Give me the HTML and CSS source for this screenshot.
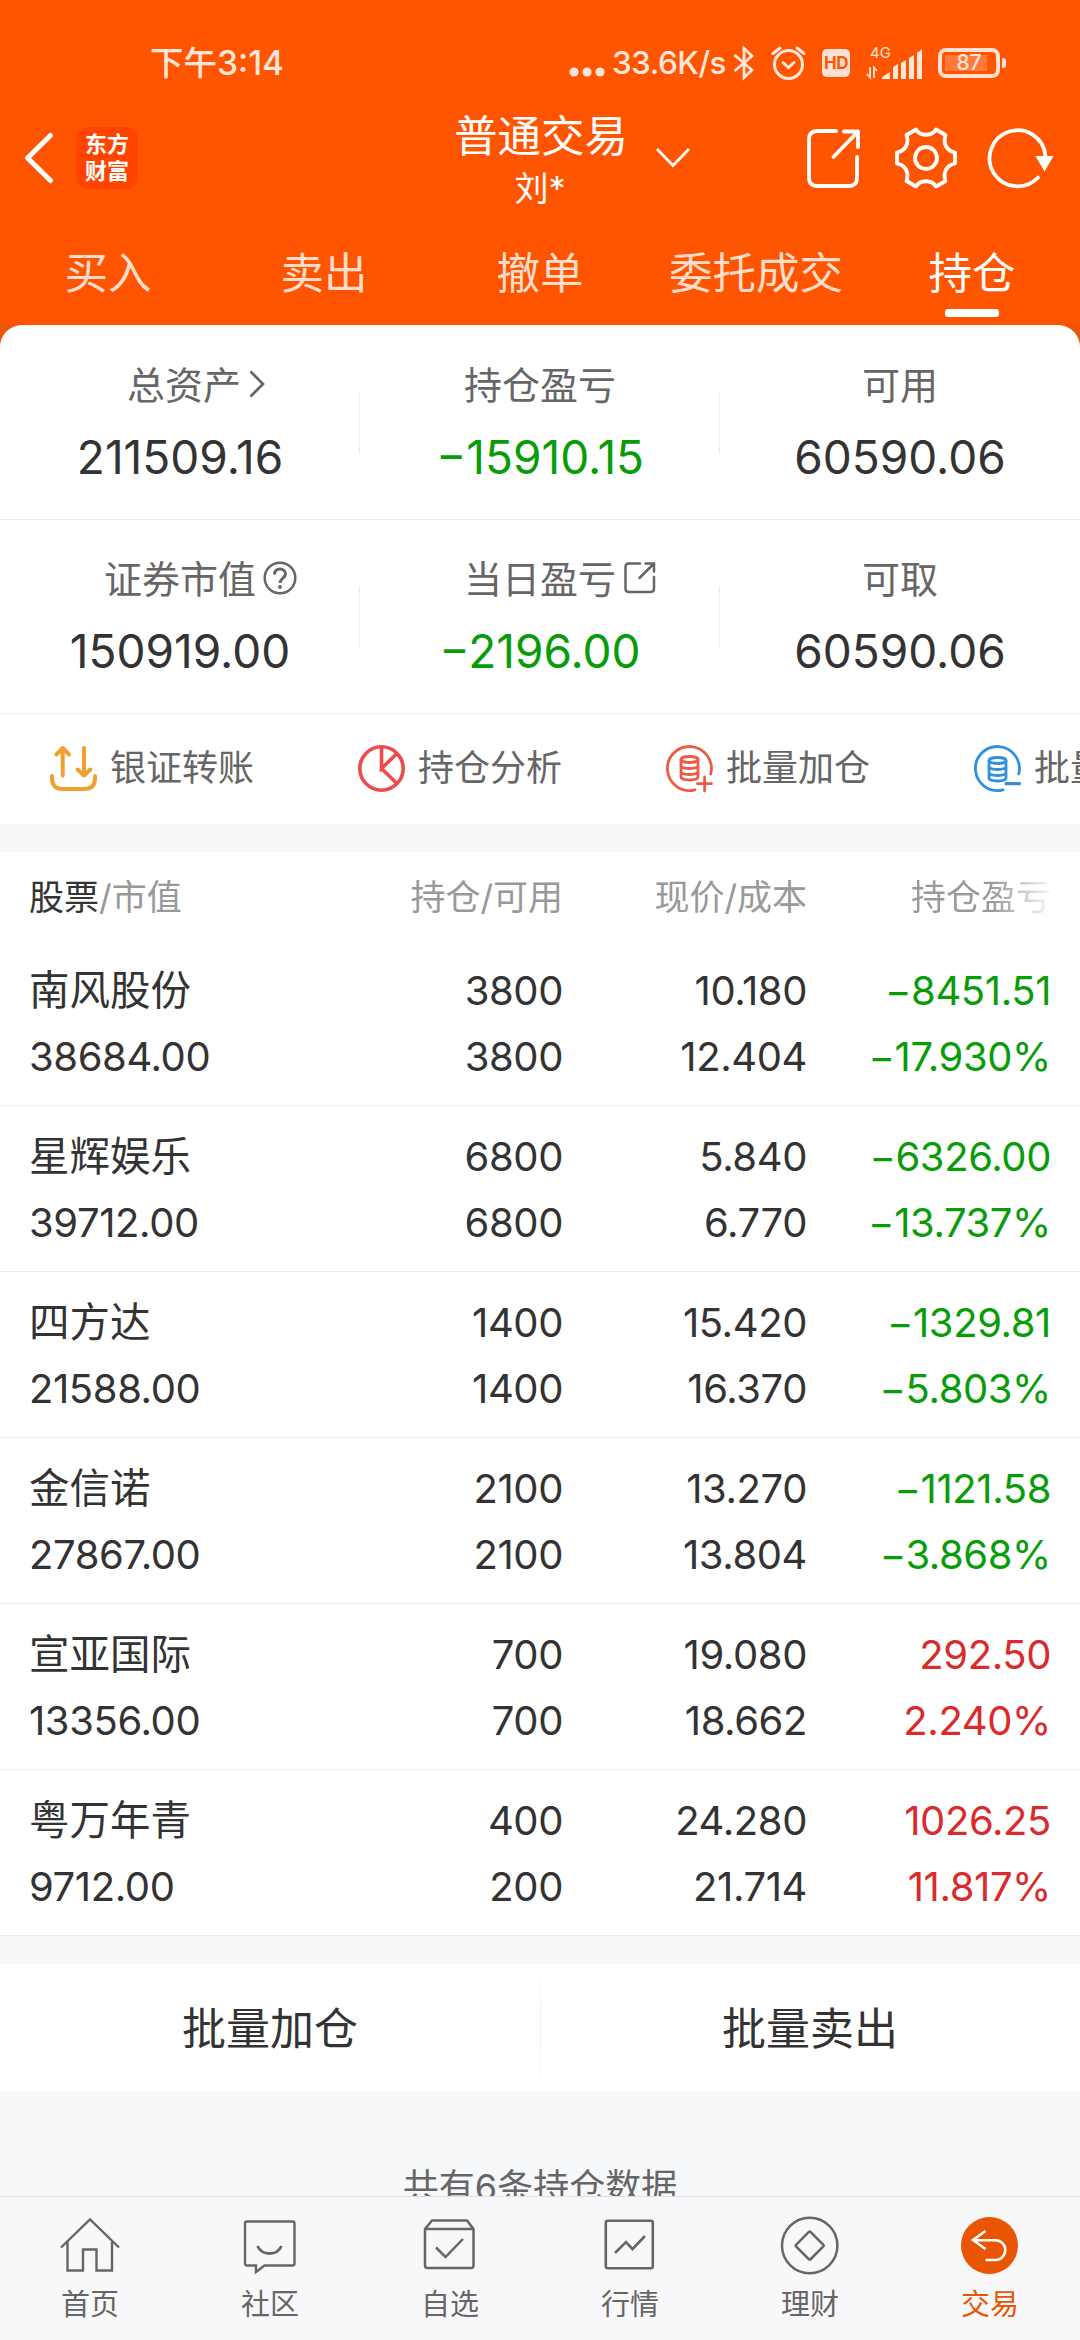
FILE: index.html
```html
<!DOCTYPE html>
<html lang="zh-CN">
<head>
    <meta charset="UTF-8">
    <meta name="viewport" content="width=device-width, initial-scale=1.0">
    <title>普通交易 - 持仓</title>
    <link rel="stylesheet" href="styles.css">
</head>
<body>
    <div class="app">
        <header class="header">
            <!-- Status bar -->
            <div class="status-bar">
                <span class="status-time">下午3:14</span>
                <div class="status-right">
                    <svg class="status-dots" width="36" height="34" viewBox="0 0 36 34" fill="currentColor"><circle cx="5" cy="26" r="4.6"/><circle cx="18" cy="26" r="4.6"/><circle cx="31" cy="26" r="4.6"/></svg>
                    <span class="status-speed">33.6K/s</span>
                    <svg width="22" height="36" viewBox="0 0 22 36" fill="none" stroke="currentColor" stroke-width="2.8"><path d="M1.5 10 19 25 11 32.5V3.5L19 11 1.5 26"/></svg>
                    <svg width="35" height="36" viewBox="0 0 35 36" fill="none" stroke="currentColor" stroke-width="3" stroke-linecap="round"><circle cx="17.5" cy="19.5" r="14"/><path d="M12 17.5l5.5 5 5.5-5M2 8.5 9 3M33 8.5 26 3"/></svg>
                    <span class="status-hd">HD</span>
                    <svg width="56" height="36" viewBox="0 0 56 36" fill="currentColor"><text x="4" y="13" class="status-4g">4G</text><path d="M16 34v-2l8-5v7zM27 34V22l5-3v15zM35 34V18l5-3v19zM43 34V13l5-3v24zM51 34V8l5-4v30z"/><path d="M4 22v10.5L.8 29M8 33V22.5l3 3.5" fill="none" stroke="currentColor" stroke-width="1.8"/></svg>
                    <div class="battery"><span class="battery-level">87</span></div>
                </div>
            </div>

            <!-- Title bar -->
            <div class="title-bar">
                <div class="title-left">
                    <svg width="30" height="54" viewBox="0 0 30 54" fill="none" stroke="currentColor" stroke-width="5" stroke-linecap="round" stroke-linejoin="round"><path d="M26.5 4.5 3.5 27l23 22.5"/></svg>
                    <div class="logo"><span>东方</span><span>财富</span></div>
                </div>
                <div class="title-center">
                    <h1 class="title">普通交易</h1>
                    <span class="user-name">刘*</span>
                </div>
                <svg class="title-arrow" width="34" height="20" viewBox="0 0 34 20" fill="none" stroke="currentColor" stroke-width="2.8"><path d="M1 1l16 16.5L33 1"/></svg>
                <div class="title-actions">
                    <svg width="60" height="62" viewBox="0 0 60 62" fill="none" stroke="currentColor" stroke-width="3.8" stroke-linecap="round" stroke-linejoin="round"><path d="M31 4H12q-8 0-8 8v39q0 8 8 8h32q8 0 8-8V30M39 4.500h14V20M53 4.5 28.5 30"/></svg>
                    <svg width="62" height="62" viewBox="0 0 62 62" fill="none" stroke="currentColor" stroke-width="3.8" stroke-linejoin="round"><path d="M21 2.5C25 9.5 37 9.5 41 2.500L50.5 8C47.5 17 52 24 60 25.5V36.5C52 38 47.5 45 50.5 54L41 59.5C37 52.5 25 52.5 21 59.5L11.5 54C14.5 45 10 38 2 36.5V25.5C10 24 14.5 17 11.5 8Z"/><circle cx="31" cy="31" r="11"/></svg>
                    <svg width="66" height="62" viewBox="0 0 66 62" fill="none" stroke="currentColor" stroke-width="3.7" stroke-linecap="round"><path d="M58.5 29A28 28 0 1 0 51 50.5"/><path d="M48.5 29h18l-9 15.5z" fill="currentColor" stroke="none"/></svg>
                </div>
            </div>

            <!-- Trade tabs -->
            <nav class="tabs">
                <span class="tab">买入</span>
                <span class="tab">卖出</span>
                <span class="tab">撤单</span>
                <span class="tab">委托成交</span>
                <span class="tab active">持仓</span>
            </nav>
        </header>

        <main class="content">
            <!-- Account summary -->
            <div class="account-wrap">
                <section class="account">
                    <div class="account-row">
                        <div class="account-item">
                            <div class="label label-link">总资产<svg class="arrow-icon" width="16" height="28" viewBox="0 0 16 28" fill="none" stroke="currentColor" stroke-width="2.7"><path d="M1.5 1.5 14 14 1.5 26.5"/></svg></div>
                            <div class="value">211509.16</div>
                        </div>
                        <div class="account-item">
                            <div class="label">持仓盈亏</div>
                            <div class="value down">−15910.15</div>
                        </div>
                        <div class="account-item">
                            <div class="label">可用</div>
                            <div class="value">60590.06</div>
                        </div>
                    </div>
                    <div class="account-row">
                        <div class="account-item">
                            <div class="label">证券市值<svg class="label-icon" width="34" height="34" viewBox="0 0 34 34" fill="none" stroke="currentColor" stroke-width="2.5"><circle cx="17" cy="17" r="15.3"/><path d="M11.5 13.5C11.5 10 14 8 17 8s5.5 2.2 5.5 5c0 4-5.5 4.3-5.5 9" stroke-width="3"/><circle cx="17" cy="26" r="1.9" fill="currentColor" stroke="none"/></svg></div>
                            <div class="value">150919.00</div>
                        </div>
                        <div class="account-item">
                            <div class="label">当日盈亏<svg class="label-icon" width="34" height="34" viewBox="0 0 34 34" fill="none" stroke="currentColor" stroke-width="2.5" stroke-linecap="round"><path d="M17 2.5H6Q2.5 2.5 2.5 6v21.5Q2.5 31 6 31h21.5q3.5 0 3.5-3.5V16M22.5 2.5H31v8M31 2.5 16.5 17"/></svg></div>
                            <div class="value down">−2196.00</div>
                        </div>
                        <div class="account-item">
                            <div class="label">可取</div>
                            <div class="value">60590.06</div>
                        </div>
                    </div>
                </section>
            </div>

            <section class="shortcuts">
                <div class="shortcut">
                    <svg width="47" height="47" viewBox="0 0 47 47" fill="none" stroke="#f0a030" stroke-width="4" stroke-linecap="round" stroke-linejoin="round"><path d="M12.7 30.5V3M6.5 9.5 12.7 3l6.3 6.5M34 3v27.5M27.7 24.5l6.3 6 6.3-6M2 31v2q0 11 11 11h21q11 0 11-11v-2"/></svg>
                    <span>银证转账</span>
                </div>
                <div class="shortcut">
                    <svg width="47" height="47" viewBox="0 0 47 47" fill="none" stroke="#ef4b4b" stroke-width="3.6"><circle cx="23.5" cy="23.5" r="21.7"/><path d="M23.5 2v21.5L39 8.5M23.5 23.5 39 38.5"/></svg>
                    <span>持仓分析</span>
                </div>
                <div class="shortcut">
                    <svg width="47" height="47" viewBox="0 0 47 47" fill="none" stroke="#ee5a45" stroke-width="2.8" stroke-linecap="round"><path d="M44.7 29A22 22 0 1 0 29 44.8M38.6 32v14M31.5 38.7h14"/><ellipse cx="23.5" cy="14.5" rx="8.5" ry="3"/><path d="M15 14.5v17.5c0 4 17 4 17 0V14.5M15 20.5c0 4 17 4 17 0M15 26.5c0 4 17 4 17 0"/></svg>
                    <span>批量加仓</span>
                </div>
                <div class="shortcut">
                    <svg width="47" height="47" viewBox="0 0 47 47" fill="none" stroke="#3090dd" stroke-width="2.8" stroke-linecap="round"><path d="M44.7 29A22 22 0 1 0 29 44.8"/><path d="M32 38.7h13.5" stroke-width="3.2"/><ellipse cx="23.5" cy="15.5" rx="8.5" ry="3"/><path d="M15 15.5v17.5c0 4 17 4 17 0V15.5M15 21.5c0 4 17 4 17 0M15 27.5c0 4 17 4 17 0"/></svg>
                    <span>批量卖出</span>
                </div>
            </section>

            <!-- Holdings -->
            <section class="holdings">
                <div class="holdings-head">
                    <div><span class="sorted">股票</span>/市值</div>
                    <div>持仓/可用</div>
                    <div>现价/成本</div>
                    <div class="fade">持仓盈亏</div>
                </div>
                <div class="holding">
                    <div><span class="name">南风股份</span><br>38684.00</div>
                    <div>3800<br>3800</div>
                    <div>10.180<br>12.404</div>
                    <div class="down">−8451.51<br>−17.930%</div>
                </div>
                <div class="holding">
                    <div><span class="name">星辉娱乐</span><br>39712.00</div>
                    <div>6800<br>6800</div>
                    <div>5.840<br>6.770</div>
                    <div class="down">−6326.00<br>−13.737%</div>
                </div>
                <div class="holding">
                    <div><span class="name">四方达</span><br>21588.00</div>
                    <div>1400<br>1400</div>
                    <div>15.420<br>16.370</div>
                    <div class="down">−1329.81<br>−5.803%</div>
                </div>
                <div class="holding">
                    <div><span class="name">金信诺</span><br>27867.00</div>
                    <div>2100<br>2100</div>
                    <div>13.270<br>13.804</div>
                    <div class="down">−1121.58<br>−3.868%</div>
                </div>
                <div class="holding">
                    <div><span class="name">宣亚国际</span><br>13356.00</div>
                    <div>700<br>700</div>
                    <div>19.080<br>18.662</div>
                    <div class="up">292.50<br>2.240%</div>
                </div>
                <div class="holding">
                    <div><span class="name">粤万年青</span><br>9712.00</div>
                    <div>400<br>200</div>
                    <div>24.280<br>21.714</div>
                    <div class="up">1026.25<br>11.817%</div>
                </div>
            </section>

            <!-- Batch actions -->
            <div class="batch">
                <span class="batch-btn">批量加仓</span>
                <span class="batch-btn">批量卖出</span>
            </div>
            <p class="total">共有6条持仓数据</p>
        </main>

        <!-- Bottom navigation -->
        <nav class="bottom-nav">
            <div class="nav-item">
                <svg width="60" height="60" viewBox="0 0 60 60" fill="none" stroke="currentColor" stroke-width="2.4"><path d="M1 32.5 30 4.5l29 28M7.5 27v28.5H23v-21h13.5v21H52V27"/></svg>
                <span>首页</span>
            </div>
            <div class="nav-item">
                <svg width="60" height="60" viewBox="0 0 60 60" fill="none" stroke="currentColor" stroke-width="2.4"><path d="M7 6.5h45.5q2 0 2 2v40q0 2-2 2h-28L16 57v-6.5H7q-2 0-2-2v-40q0-2 2-2z"/><path d="M17.5 31c4.5 10 19.5 10 24 0" stroke-width="2.8"/></svg>
                <span>社区</span>
            </div>
            <div class="nav-item">
                <svg width="60" height="60" viewBox="0 0 60 60" fill="none" stroke="currentColor" stroke-width="2.5"><path d="M5 14l7-8.500h35l6.5 8.5v36.5q0 2.5-2.5 2.5H7.5Q5 53 5 50.5zH53.5M16 32.5l9.5 9.5L43 24"/></svg>
                <span>自选</span>
            </div>
            <div class="nav-item">
                <svg width="60" height="60" viewBox="0 0 60 60" fill="none" stroke="currentColor" stroke-width="2.6"><rect x="5.8" y="5.8" width="47" height="47.4" rx="2"/><path d="M15 38l11-11 6.5 7L45 21"/></svg>
                <span>行情</span>
            </div>
            <div class="nav-item">
                <svg width="60" height="60" viewBox="0 0 60 60" fill="none" stroke="currentColor" stroke-width="2.5"><circle cx="29.7" cy="30.5" r="27.7"/><rect x="19.5" y="20.3" width="20.5" height="20.5" rx="1.5" transform="rotate(45 29.7 30.5)"/></svg>
                <span>理财</span>
            </div>
            <div class="nav-item active">
                <svg width="60" height="60" viewBox="0 0 60 60" fill="none"><circle cx="29.5" cy="30.5" r="28.5" fill="#ea5504"/><path d="M25.5 16 13 25l12.5 9M13 25.3h22.5a9.8 9.8 0 0 1 0 19.6H25.5" stroke="#fff" stroke-width="2.5"/></svg>
                <span>交易</span>
            </div>
        </nav>
    </div>
</body>
</html>
```

FILE: styles.css
```css
* {
    margin: 0;
    padding: 0;
    box-sizing: border-box;
}

body {
    font-family: Inter, "Noto Sans CJK SC", sans-serif;
    background-color: #f7f8fa;
    color: #333;
}

svg {
    display: block;
    flex-shrink: 0;
    overflow: visible;
}

.app {
    display: flex;
    flex-direction: column;
    width: 1080px;
    height: 2340px;
    overflow: hidden;
}

/* Header */
.header {
    flex: none;
    height: 325px;
    background-color: #ff5500;
    color: #fff;
}

.status-bar {
    display: flex;
    justify-content: space-between;
    align-items: center;
    height: 100px;
    padding: 26px 74px 0 150px;
    color: #ffe6da;
}

.status-time {
    font-size: 33.5px;
    font-weight: 500;
    line-height: 40px;
}

.status-right {
    display: flex;
    align-items: center;
    gap: 16px;
}

.status-dots {
    margin-right: -9px;
}

.status-speed {
    font-size: 31.5px;
    font-weight: 500;
    line-height: 40px;
    letter-spacing: -0.5px;
    margin-right: -9px;
}

.status-hd {
    width: 28px;
    height: 28px;
    border-radius: 5px;
    background-color: #ffe0d2;
    color: #ff5500;
    font-size: 17px;
    font-weight: 700;
    line-height: 28px;
    letter-spacing: -0.5px;
    text-align: center;
}

.status-4g {
    font-size: 15px;
}

.battery {
    position: relative;
    width: 62px;
    height: 30px;
    margin-right: 6px;
    padding: 3px;
    border: 4px solid #ffe0d2;
    border-radius: 8px;
}

.battery::after {
    content: "";
    position: absolute;
    top: 6px;
    right: -10px;
    width: 4px;
    height: 10px;
    border-radius: 0 3px 3px 0;
    background-color: #ffe0d2;
}

.battery-level {
    display: block;
    width: 42px;
    height: 16px;
    padding-left: 6px;
    background-color: #ff7a3a;
    font-size: 21px;
    font-weight: 500;
    line-height: 16px;
    text-align: center;
}

.title-bar {
    display: grid;
    grid-template-columns: 454px 172px 179px 1fr;
    align-items: center;
    height: 116px;
}

.title-left {
    display: flex;
    align-items: center;
    gap: 22px;
    padding-left: 24px;
}

.logo {
    display: flex;
    flex-direction: column;
    align-items: center;
    justify-content: center;
    width: 62px;
    height: 62px;
    border-radius: 12px;
    background-color: #ff4400;
    font-size: 22px;
    font-weight: 700;
    line-height: 27px;
}

.title-center {
    padding-top: 8px;
    text-align: center;
}

.title {
    font-size: 43.5px;
    font-weight: 400;
    line-height: 54px;
    white-space: nowrap;
}

.user-name {
    display: block;
    font-size: 34px;
    line-height: 52px;
}

.title-arrow {
    margin-left: 30px;
}

.title-actions {
    display: flex;
    gap: 30px;
}

.tabs {
    display: grid;
    grid-template-columns: repeat(5, 1fr);
    padding-top: 27px;
}

.tab {
    display: flex;
    flex-direction: column;
    align-items: center;
    color: #ffddcc;
    font-size: 43.5px;
    line-height: 60px;
}

.tab.active {
    color: #fff;
}

.tab.active::after {
    content: "";
    width: 54px;
    height: 8px;
    margin-top: 6px;
    border-radius: 3px;
    background-color: #fff;
}

/* Content area above the bottom navigation */
.content {
    flex: 1;
    min-height: 0;
    overflow: hidden;
}

.account-wrap {
    background-color: #ea5509;
}

.account {
    padding-top: 1px;
    border-radius: 22px 22px 0 0;
    background-color: #fff;
}

.account-row {
    display: grid;
    grid-template-columns: repeat(3, 1fr);
    height: 194px;
    padding-top: 29px;
    border-bottom: 1px solid #ececec;
}

.account-item {
    display: flex;
    flex-direction: column;
    align-items: center;
    gap: 12px;
    background: linear-gradient(#ececec, #ececec) no-repeat right 0 top 37px / 1px 62px;
}

.account-item:last-child {
    background: none;
}

.label {
    display: flex;
    align-items: center;
    color: #666;
    font-size: 38px;
    line-height: 60px;
}

.label-link {
    margin-left: 8px;
}

.arrow-icon {
    margin: -3px -24px 0 8px;
}

.label-icon {
    margin: -3px -41px 0 7px;
}

.value {
    font-size: 46px;
    line-height: 60px;
}

.down {
    color: #099c09;
}

.up {
    color: #d92b2b;
}

.shortcuts {
    display: flex;
    height: 110px;
    padding: 0 0 2px 50px;
    background-color: #fff;
    overflow: hidden;
}

.shortcut {
    display: flex;
    flex: none;
    align-items: center;
    gap: 13px;
    width: 308px;
    color: #666;
    font-size: 36px;
    line-height: 40px;
    white-space: nowrap;
}

/* Holdings table */
.holdings {
    margin-top: 28px;
    background-color: #fff;
}

.holdings-head,
.holding {
    display: grid;
    grid-template-columns: 284px 250px 244px 244px;
    padding: 0 29px;
    text-align: right;
    white-space: nowrap;
}

.holdings-head > :first-child,
.holding > :first-child {
    text-align: left;
}

.holdings-head {
    height: 88px;
    color: #999;
    font-size: 35px;
    line-height: 90px;
}

.sorted {
    color: #333;
}

.fade {
    background: linear-gradient(90deg, #999 76%, #f0f0f0 98%);
    background-clip: text;
    -webkit-background-clip: text;
    color: transparent;
}

.holding {
    height: 166px;
    padding-top: 18px;
    border-bottom: 1px solid #ececec;
    font-size: 40px;
    letter-spacing: -0.4px;
    line-height: 66px;
}

.name {
    font-size: 40.5px;
    letter-spacing: 0;
}

/* Batch buttons */
.batch {
    display: grid;
    grid-template-columns: 1fr 1fr;
    height: 127px;
    margin-top: 28px;
    background: linear-gradient(#fff, #eee, #fff) no-repeat center / 1px 100% #fff;
}

.batch-btn {
    font-size: 44px;
    line-height: 131px;
    text-align: center;
}

.total {
    padding-top: 66px;
    color: #666;
    font-size: 36px;
    line-height: 60px;
    text-align: center;
}

/* Bottom navigation */
.bottom-nav {
    display: grid;
    flex: none;
    grid-template-columns: repeat(6, 1fr);
    height: 144px;
    padding-top: 18px;
    border-top: 1px solid #e0e0e0;
    background-color: #f8f8fa;
}

.nav-item {
    display: flex;
    flex-direction: column;
    align-items: center;
    color: #666;
    font-size: 29px;
}

.nav-item span {
    margin-top: 10px;
    line-height: 40px;
}

.nav-item.active {
    color: #ea5504;
}
```
